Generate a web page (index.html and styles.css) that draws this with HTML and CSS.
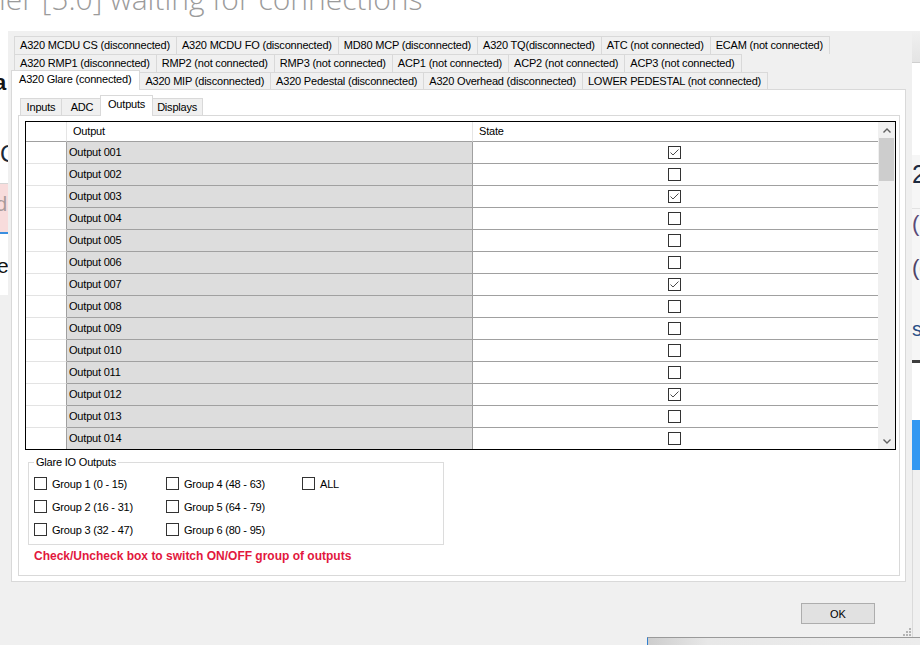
FILE: index.html
```html
<!DOCTYPE html>
<html>
<head>
<meta charset="utf-8">
<title>Glare IO Outputs</title>
<link rel="stylesheet" href="styles.css">
</head>
<body>
<div class="bg-title">ler [5.0] waiting for connections</div>
<div class="bg-lower"></div>
<div class="bg-left">
  <div class="bl-gap g45"></div>
  <div class="bl-glyph ga">a</div>
  <div class="bl-gap g53"></div>
  <div class="bl-glyph gc">C</div>
  <div class="bl-gap g20"></div>
  <div class="bl-line"></div>
  <div class="bl-pink">d</div>
  <div class="bl-blue"></div>
  <div class="bl-white"><span class="ge">e</span></div>
</div>
<div class="bg-right">
  <div class="br-top"></div>
  <div class="br-white w92"></div>
  <div class="br-panel">
    <div class="br-gap h6"></div>
    <div class="br-glyph g2">2</div>
    <div class="br-gap h22"></div>
    <div class="br-glyph gp">(</div>
    <div class="br-gap h12"></div>
    <div class="br-glyph gpc">(c</div>
    <div class="br-gap h38"></div>
    <div class="br-glyph gs">s</div>
  </div>
  <div class="br-dark"></div>
  <div class="br-white w57"></div>
  <div class="br-blue"></div>
  <div class="br-grey"></div>
</div>
<div class="bg-bar"></div>

<div class="dialog">
  <div class="tabrow">
    <div class="tab">A320 MCDU CS (disconnected)</div>
    <div class="tab">A320 MCDU FO (disconnected)</div>
    <div class="tab">MD80 MCP (disconnected)</div>
    <div class="tab">A320 TQ(disconnected)</div>
    <div class="tab">ATC (not connected)</div>
    <div class="tab">ECAM (not connected)</div>
  </div>
  <div class="tabrow">
    <div class="tab">A320 RMP1 (disconnected)</div>
    <div class="tab">RMP2 (not connected)</div>
    <div class="tab">RMP3 (not connected)</div>
    <div class="tab">ACP1 (not connected)</div>
    <div class="tab">ACP2 (not connected)</div>
    <div class="tab">ACP3 (not connected)</div>
  </div>
  <div class="tabrow front">
    <div class="tab sel">A320 Glare (connected)</div>
    <div class="tab">A320 MIP (disconnected)</div>
    <div class="tab">A320 Pedestal (disconnected)</div>
    <div class="tab">A320 Overhead (disconnected)</div>
    <div class="tab">LOWER PEDESTAL (not connected)</div>
  </div>
  <div class="page">
    <div class="itabrow">
      <div class="itab">Inputs</div>
      <div class="itab">ADC</div>
      <div class="itab sel">Outputs</div>
      <div class="itab">Displays</div>
    </div>
    <div class="ipage">
      <div class="grid">
        <div class="grid-main">
          <div class="grow ghead"><div class="c rh"></div><div class="c out">Output</div><div class="c st">State</div></div>
          <div class="grow"><div class="c rh"></div><div class="c out">Output 001</div><div class="c st"><span class="cb on"><svg viewBox="0 0 11 11"><path d="M1.5 5.5 L4 8 L9.5 2.5"/></svg></span></div></div>
          <div class="grow"><div class="c rh"></div><div class="c out">Output 002</div><div class="c st"><span class="cb"></span></div></div>
          <div class="grow"><div class="c rh"></div><div class="c out">Output 003</div><div class="c st"><span class="cb on"><svg viewBox="0 0 11 11"><path d="M1.5 5.5 L4 8 L9.5 2.5"/></svg></span></div></div>
          <div class="grow"><div class="c rh"></div><div class="c out">Output 004</div><div class="c st"><span class="cb"></span></div></div>
          <div class="grow"><div class="c rh"></div><div class="c out">Output 005</div><div class="c st"><span class="cb"></span></div></div>
          <div class="grow"><div class="c rh"></div><div class="c out">Output 006</div><div class="c st"><span class="cb"></span></div></div>
          <div class="grow"><div class="c rh"></div><div class="c out">Output 007</div><div class="c st"><span class="cb on"><svg viewBox="0 0 11 11"><path d="M1.5 5.5 L4 8 L9.5 2.5"/></svg></span></div></div>
          <div class="grow"><div class="c rh"></div><div class="c out">Output 008</div><div class="c st"><span class="cb"></span></div></div>
          <div class="grow"><div class="c rh"></div><div class="c out">Output 009</div><div class="c st"><span class="cb"></span></div></div>
          <div class="grow"><div class="c rh"></div><div class="c out">Output 010</div><div class="c st"><span class="cb"></span></div></div>
          <div class="grow"><div class="c rh"></div><div class="c out">Output 011</div><div class="c st"><span class="cb"></span></div></div>
          <div class="grow"><div class="c rh"></div><div class="c out">Output 012</div><div class="c st"><span class="cb on"><svg viewBox="0 0 11 11"><path d="M1.5 5.5 L4 8 L9.5 2.5"/></svg></span></div></div>
          <div class="grow"><div class="c rh"></div><div class="c out">Output 013</div><div class="c st"><span class="cb"></span></div></div>
          <div class="grow"><div class="c rh"></div><div class="c out">Output 014</div><div class="c st"><span class="cb"></span></div></div>
        </div>
        <div class="vscroll">
          <div class="sb-btn"><svg viewBox="0 0 8 5" width="8" height="5"><path d="M0.5 4.5 L4 1 L7.5 4.5"/></svg></div>
          <div class="sb-thumb"></div>
          <div class="sb-track"></div>
          <div class="sb-btn"><svg viewBox="0 0 8 5" width="8" height="5"><path d="M0.5 0.5 L4 4 L7.5 0.5"/></svg></div>
        </div>
      </div>
      <fieldset class="gbox">
        <legend>Glare IO Outputs</legend>
        <div class="gbox-grid">
          <label class="opt"><span class="cb"></span>Group 1 (0 - 15)</label>
          <label class="opt"><span class="cb"></span>Group 2 (16 - 31)</label>
          <label class="opt"><span class="cb"></span>Group 3 (32 - 47)</label>
          <label class="opt"><span class="cb"></span>Group 4 (48 - 63)</label>
          <label class="opt"><span class="cb"></span>Group 5 (64 - 79)</label>
          <label class="opt"><span class="cb"></span>Group 6 (80 - 95)</label>
          <label class="opt"><span class="cb"></span>ALL</label>
        </div>
      </fieldset>
      <div class="hint">Check/Uncheck box to switch ON/OFF group of outputs</div>
    </div>
  </div>
  <div class="foot"><button class="ok">OK</button></div>
  <svg class="grip" width="9" height="9" viewBox="0 0 9 9">
    <rect x="7" y="1" width="2" height="2"/>
    <rect x="4" y="4" width="2" height="2"/><rect x="7" y="4" width="2" height="2"/>
    <rect x="1" y="7" width="2" height="2"/><rect x="4" y="7" width="2" height="2"/><rect x="7" y="7" width="2" height="2"/>
  </svg>
</div>
</body>
</html>
```

FILE: styles.css
```css
* { box-sizing: border-box; }
html, body { margin: 0; padding: 0; }
body {
  width: 920px;
  height: 645px;
  overflow: hidden;
  position: relative;
  background: #fff;
  font: 11px "Liberation Sans", Arial, sans-serif;
  letter-spacing: -0.2px;
  color: #000;
}

/* ---------- background window glimpses ---------- */
.bg-title {
  position: absolute;
  left: -1px;
  top: -16px;
  font-family: "Open Sans", "Liberation Sans", sans-serif;
  font-weight: 300;
  font-size: 30px;
  line-height: 30px;
  letter-spacing: 0;
  color: #9b9b9b;
  white-space: nowrap;
}
.bg-lower {
  position: absolute;
  left: 0; right: 0; top: 295px; bottom: 0;
  background: #f0f0f0;
}
.bg-left {
  position: absolute;
  left: 0; top: 31px;
  width: 8px; height: 264px;
  overflow: hidden;
  display: flex;
  flex-direction: column;
  background: #fff;
}
.bl-gap.g45 { height: 45px; flex: none; }
.bl-gap.g53 { height: 53px; flex: none; }
.bl-gap.g20 { height: 20px; flex: none; }
.bl-glyph { flex: none; overflow: hidden; white-space: nowrap; letter-spacing: 0; }
.bl-glyph.ga { height: 16px; font: bold 22px/14px "Liberation Sans", sans-serif; text-indent: -6px; color: #151515; }
.bl-glyph.gc { height: 18px; font: 24px/18px "Liberation Sans", sans-serif; text-indent: 0; color: #1b2838; }
.bl-line { height: 1px; flex: none; background: #d5d5d5; }
.bl-pink { height: 48px; flex: none; background: #f8dcdc; color: #a89a9a; font: 20px/40px "Liberation Sans", sans-serif; text-indent: -4px; overflow: hidden; }
.bl-blue { height: 2px; flex: none; background: #3b8fe0; }
.bl-white { height: 61px; flex: none; background: #fff; overflow: hidden; padding-top: 22px; }
.ge { display: block; font: 21px/20px "Liberation Sans", sans-serif; text-indent: -3px; color: #111; letter-spacing: 0; }

.bg-right {
  position: absolute;
  left: 912px; top: 31px; bottom: 0;
  width: 8px;
  overflow: hidden;
  display: flex;
  flex-direction: column;
}
.br-top { height: 32px; flex: none; background: linear-gradient(#f0f0f0, #e4e4e4); border-bottom: 1px solid #cfcfcf; }
.br-white { flex: none; background: #fff; }
.br-white.w92 { height: 92px; }
.br-white.w57 { height: 57px; }
.br-panel { height: 205px; flex: none; background: #f6f6f6; display: flex; flex-direction: column; overflow: hidden; letter-spacing: 0; }
.br-gap.h6 { height: 6px; flex: none; }
.br-gap.h22 { height: 22px; flex: none; border-bottom: 1px solid #e2e2e2; }
.br-gap.h12 { height: 12px; flex: none; }
.br-gap.h38 { height: 38px; flex: none; }
.br-glyph { flex: none; white-space: nowrap; font-family: "Liberation Sans", sans-serif; }
.br-glyph.g2 { height: 26px; font-size: 25px; line-height: 26px; color: #1c2a40; }
.br-glyph.gp { height: 32px; font-size: 22px; line-height: 30px; color: #5a4a78; }
.br-glyph.gpc { height: 30px; font-size: 22px; line-height: 30px; color: #4f4468; }
.br-glyph.gs { height: 17px; font-size: 20px; line-height: 16px; color: #2a4f86; }
.br-dark { height: 3px; flex: none; background: #3d3d3d; }
.br-blue { height: 50px; flex: none; background: #3398f2; }
.br-grey { flex: 1; background: #f0f0f0; border-left: 1px solid #dadada; }

.bg-bar {
  position: absolute;
  left: 647px; top: 637px; right: 0; height: 8px;
  border-top: 1px solid #9a9a9a;
  border-left: 1px solid #2f7fd0;
  background: linear-gradient(to right, #cdcdcd, #e8e8e8 60px, #ececec);
}

/* ---------- dialog ---------- */
.dialog {
  position: absolute;
  left: 8px; top: 31px;
  width: 904px; height: 606px;
  background: #f0f0f0;
  padding: 5px 6px 0 3px;
  display: flex;
  flex-direction: column;
}

.tabrow {
  display: flex;
  height: 18px;
  flex: none;
  padding-left: 3px;
}
.tabrow.front {
  height: 17px;
  position: relative;
  z-index: 1;
}
.tab {
  height: 100%;
  border: 1px solid #d9d9d9;
  border-bottom: 0;
  padding: 0 6px 0 5px;
  margin-right: -1px;
  line-height: 16px;
  letter-spacing: -0.2px;
  white-space: nowrap;
  background: #f0f0f0;
}
.tabrow.front .tab { line-height: 17px; }
.tabrow.front .tab.sel {
  background: #fff;
  height: 20px;
  margin-top: -2px;
  margin-left: -3px;
  padding: 0 8px 0 7px;
  line-height: 17px;
  position: relative;
  z-index: 1;
}

.page {
  height: 493px;
  flex: none;
  border: 1px solid #d9d9d9;
  background: #fff;
  padding: 5px 5px 0 6px;
  display: flex;
  flex-direction: column;
}

.itabrow {
  display: flex;
  height: 20px;
  flex: none;
  align-items: flex-end;
  padding-left: 2px;
  position: relative;
  z-index: 1;
}
.itab {
  height: 17px;
  min-width: 42px;
  border: 1px solid #d9d9d9;
  border-bottom: 0;
  padding: 0 5px;
  margin-right: -1px;
  text-align: center;
  line-height: 16px;
  white-space: nowrap;
  background: #f0f0f0;
}
.itab.sel {
  height: 21px;
  margin: 0 -2px -1px -2px;
  padding: 0 7px;
  line-height: 17px;
  background: #fff;
  position: relative;
  z-index: 2;
}

.ipage {
  height: 461px;
  flex: none;
  border: 1px solid #d9d9d9;
  background: #fff;
  padding: 5px 3px 0 6px;
}

/* ---------- data grid ---------- */
.grid {
  height: 329px;
  border: 1px solid #000;
  display: flex;
}
.grid-main {
  flex: 1;
  overflow: hidden;
}
.grow {
  display: grid;
  grid-template-columns: 41px 406px 1fr;
  height: 22px;
}
.grow.ghead { height: 20px; }
.c {
  border-bottom: 1px solid #a0a0a0;
  border-right: 1px solid #a0a0a0;
  white-space: nowrap;
  overflow: hidden;
}
.grow .rh { background: #fff; border-bottom-color: #e3e3e3; }
.grow .out { background: #dddddd; padding-left: 2px; line-height: 21px; }
.grow .st {
  background: #fff;
  border-right: 0;
  display: flex;
  align-items: center;
  justify-content: center;
  padding-right: 3px;
}
.ghead .c {
  background: #fff;
  border-bottom-color: #a0a0a0;
  border-right-color: #e5e5e5;
  padding-left: 6px;
  line-height: 19px;
  display: block;
}

.cb {
  width: 13px;
  height: 13px;
  flex: none;
  border: 1px solid #333;
  background: #fff;
  display: block;
}
.cb svg {
  display: block;
  width: 11px;
  height: 11px;
  fill: none;
  stroke: #4a4a4a;
  stroke-width: 1;
}

.vscroll {
  width: 17px;
  flex: none;
  background: #f0f0f0;
  display: flex;
  flex-direction: column;
}
.sb-btn {
  height: 16px;
  flex: none;
  display: flex;
  align-items: center;
  justify-content: center;
}
.sb-btn svg { fill: none; stroke: #606060; stroke-width: 1.4; }
.sb-thumb {
  height: 43px;
  flex: none;
  margin: 0 1px;
  background: #cdcdcd;
}
.sb-track { flex: 1; }

/* ---------- group box ---------- */
.gbox {
  margin: 6px 0 0 3px;
  width: 416px;
  min-width: 0;
  border: 1px solid #dcdcdc;
  padding: 3px 5px 3px 5px;
}
.gbox legend {
  padding: 0 2px;
  line-height: 13px;
}
.gbox-grid {
  display: grid;
  grid-template-rows: repeat(3, 23px);
  grid-template-columns: 132px 136px auto;
  grid-auto-flow: column;
}
.opt {
  display: flex;
  align-items: center;
  gap: 5px;
  white-space: nowrap;
}

.hint {
  margin: 5px 0 0 9px;
  font-weight: bold;
  font-size: 12px;
  line-height: 12px;
  letter-spacing: 0;
  color: #e2173d;
}

/* ---------- footer ---------- */
.foot {
  display: flex;
  justify-content: flex-end;
  padding: 21px 31px 0 0;
}
.ok {
  width: 74px;
  height: 21px;
  border: 1px solid #adadad;
  background: #e1e1e1;
  font: inherit;
  color: #000;
  padding: 0;
}
.grip {
  position: absolute;
  right: 1px;
  bottom: 1px;
  fill: #b4b4b4;
}
```
